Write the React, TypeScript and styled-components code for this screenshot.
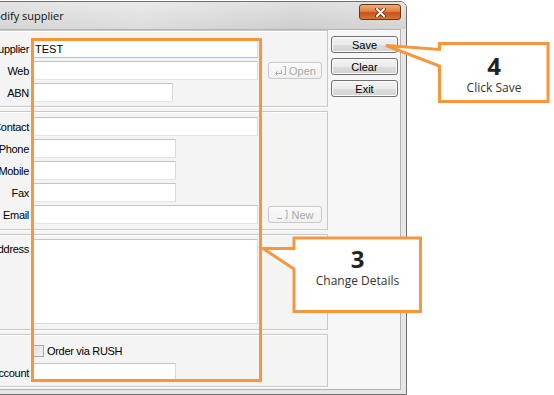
import styled, { createGlobalStyle } from 'styled-components';

const ORANGE = '#f7963c';

const GlobalStyle = createGlobalStyle`
  html, body {
    margin: 0;
    padding: 0;
    background: #ffffff;
  }

  body {
    font-family: "Liberation Sans", Arial, sans-serif;
    overflow: hidden;
  }
`;

const Stage = styled.div`
  position: relative;
  width: 554px;
  height: 395px;
  padding-top: 1px;
  box-sizing: border-box;
  overflow: hidden;
  background: #ffffff;
`;

const Window = styled.div`
  display: flex;
  flex-direction: column;
  width: 447px;
  height: 394px;
  margin-left: -40px;
  box-sizing: border-box;
  border: 1px solid #707070;
  border-radius: 7px 7px 0 0;
  background: #e6e6e6;
  overflow: hidden;
`;

const TitleBar = styled.div`
  display: flex;
  align-items: flex-start;
  flex-shrink: 0;
  height: 27px;
  background:
    linear-gradient(180deg, rgba(255, 255, 255, 0.25), rgba(0, 0, 0, 0.03)),
    linear-gradient(90deg, #d9d9d9 0%, #e3e3e3 40%, #d5d5d5 75%, #dbdbdb 100%);
`;

const Title = styled.div`
  padding: 6px 0 0 23px;
  font-family: "Open Sans", "Liberation Sans", sans-serif;
  font-size: 11px;
  line-height: 16px;
  color: #111111;
`;

const CloseButton = styled.div`
  display: flex;
  align-items: center;
  justify-content: center;
  width: 42px;
  height: 16px;
  margin: 2px 5px 0 auto;
  box-sizing: border-box;
  border: 1px solid #6b3418;
  border-radius: 3px;
  background: linear-gradient(#eeaa78 0%, #e2803f 45%, #c9511c 55%, #da7332 100%);
`;

const Client = styled.div`
  display: flex;
  flex: 1;
  margin: 0 5px 4px 7px;
  border: 1px solid #b4b4b4;
  background: #f4f4f4;
`;

const LeftPanel = styled.div`
  display: flex;
  flex-direction: column;
  gap: 4px;
  flex-shrink: 0;
  width: 359px;
`;

const Section = styled.div<{ $pt: number; $pb: number; $gap: number }>`
  display: flex;
  flex-direction: column;
  gap: ${(p) => p.$gap}px;
  padding: ${(p) => p.$pt}px 0 ${(p) => p.$pb}px;
  border: 1px solid #c8c8c8;
  box-shadow: inset 1px 1px 0 #ffffff, 0 1px 0 #ffffff;
`;

const Row = styled.div<{ $top?: boolean }>`
  display: flex;
  align-items: ${(p) => (p.$top ? 'flex-start' : 'center')};
  min-height: 13px;
`;

const Label = styled.div<{ $pt?: number }>`
  flex-shrink: 0;
  width: 63px;
  padding: ${(p) => p.$pt || 0}px 4px 0 0;
  box-sizing: border-box;
  text-align: right;
  font-size: 11px;
  letter-spacing: -0.3px;
  color: #000000;
  white-space: nowrap;
`;

const Field = styled.input<{ $w: number; $focus?: boolean }>`
  width: ${(p) => p.$w}px;
  height: 19px;
  margin: 0;
  padding: 0 0 0 1px;
  box-sizing: border-box;
  border: 1px solid #dadada;
  border-top-color: #c4c4c4;
  border-bottom-color: ${(p) => (p.$focus ? '#a9c4e0' : '#e4e4e4')};
  background: #ffffff;
  font-family: "Liberation Sans", Arial, sans-serif;
  font-size: 11px;
  color: #000000;
  outline: none;
`;

const Memo = styled.textarea`
  width: 225px;
  height: 85px;
  margin: 0;
  padding: 1px;
  box-sizing: border-box;
  border: 1px solid #dadada;
  border-top-color: #c4c4c4;
  background: #ffffff;
  resize: none;
  outline: none;
`;

const SideButton = styled.button`
  display: flex;
  align-items: center;
  justify-content: center;
  gap: 2px;
  width: 54px;
  height: 17px;
  margin-left: 10px;
  padding: 0;
  box-sizing: border-box;
  border: 1px solid #c8c8c8;
  border-radius: 3px;
  background: linear-gradient(#fafafa, #f0f0f0);
  font-family: "Liberation Sans", Arial, sans-serif;
  font-size: 11px;
  color: #a9a9a9;
`;

const Check = styled.span`
  width: 11px;
  height: 12px;
  box-sizing: border-box;
  border: 1px solid #a8a8a8;
  background: linear-gradient(135deg, #dcdcdc, #f6f6f6);
  box-shadow: inset 0 0 0 1px #eeeeee;
`;

const CheckText = styled.span`
  margin-left: 3px;
  font-size: 11px;
  letter-spacing: -0.3px;
  color: #000000;
`;

const RightColumn = styled.div`
  display: flex;
  flex-direction: column;
  gap: 5px;
  flex: 1;
  padding: 6px 0 0 3px;
  background: #f7f7f7;
`;

const ActionButton = styled.button`
  width: 67px;
  height: 17px;
  padding: 0;
  box-sizing: border-box;
  border: 1px solid #707070;
  border-radius: 3px;
  background: linear-gradient(#f3f3f3 0%, #ebebeb 50%, #dddddd 51%, #d2d2d2 100%);
  box-shadow: inset 0 0 0 1px #fbfbfb;
  font-family: "Liberation Sans", Arial, sans-serif;
  font-size: 11px;
  color: #000000;
`;

const Highlight = styled.div`
  position: absolute;
  left: 31px;
  top: 38px;
  width: 231px;
  height: 344px;
  box-sizing: border-box;
  border: 3px solid ${ORANGE};
  pointer-events: none;
`;

const CalloutLayer = styled.svg`
  position: absolute;
  left: 0;
  top: 0;
  pointer-events: none;
`;

const CalloutBody = styled.div<{ $x: number; $y: number; $w: number }>`
  position: absolute;
  left: ${(p) => p.$x}px;
  top: ${(p) => p.$y}px;
  width: ${(p) => p.$w}px;
  display: flex;
  flex-direction: column;
  align-items: center;
  font-family: "Open Sans", "Noto Sans", sans-serif;
  color: #333333;
`;

const CalloutNumber = styled.div`
  font-size: 24px;
  font-weight: 700;
  line-height: 26px;
  color: #222222;
`;

const CalloutText = styled.div`
  font-size: 12px;
  line-height: 18px;
`;

function OpenIcon() {
  return (
    <svg width="13" height="11" viewBox="0 0 13 11" fill="none" stroke="#aaaaaa" strokeWidth="1">
      <path d="M7.5 5 V8.5 H1.5 M3.5 6.5 L1.5 8.5 L3.5 10.5" />
      <path d="M9.5 1.5 H11.5 V9.5 H9.5" />
    </svg>
  );
}

function NewIcon() {
  return (
    <svg width="13" height="11" viewBox="0 0 13 11" fill="none" stroke="#aaaaaa" strokeWidth="1">
      <path d="M1 9.5 H6" />
      <path d="M9.5 1.5 H11 V9.5 H9.5" />
    </svg>
  );
}

function CloseGlyph() {
  return (
    <svg width="11" height="9" viewBox="0 0 11 9">
      <path d="M2 1 L9 8 M9 1 L2 8" stroke="#5a2a10" strokeWidth="3.6" strokeLinecap="round" />
      <path d="M2 1 L9 8 M9 1 L2 8" stroke="#ffffff" strokeWidth="2" strokeLinecap="round" />
    </svg>
  );
}

export default function App() {
  return (
    <Stage>
      <GlobalStyle />

      <Window>
        <TitleBar>
          <Title>Modify supplier</Title>
          <CloseButton>
            <CloseGlyph />
          </CloseButton>
        </TitleBar>

        <Client>
          <LeftPanel>
            <Section $pt={8} $pb={4} $gap={3}>
              <Row>
                <Label>Supplier</Label>
                <Field $w={225} $focus readOnly defaultValue="TEST" />
              </Row>
              <Row>
                <Label>Web</Label>
                <Field $w={225} readOnly />
                <SideButton disabled>
                  <OpenIcon />
                  Open
                </SideButton>
              </Row>
              <Row>
                <Label>ABN</Label>
                <Field $w={140} readOnly />
              </Row>
            </Section>

            <Section $pt={5} $pb={5} $gap={3}>
              <Row>
                <Label>Contact</Label>
                <Field $w={225} readOnly />
              </Row>
              <Row>
                <Label>Phone</Label>
                <Field $w={143} readOnly />
              </Row>
              <Row>
                <Label>Mobile</Label>
                <Field $w={143} readOnly />
              </Row>
              <Row>
                <Label>Fax</Label>
                <Field $w={143} readOnly />
              </Row>
              <Row>
                <Label>Email</Label>
                <Field $w={225} readOnly />
                <SideButton disabled>
                  <NewIcon />
                  New
                </SideButton>
              </Row>
            </Section>

            <Section $pt={4} $pb={5} $gap={0}>
              <Row $top>
                <Label $pt={4}>Address</Label>
                <Memo readOnly />
              </Row>
            </Section>

            <Section $pt={9} $pb={4} $gap={6}>
              <Row>
                <Label />
                <Check />
                <CheckText>Order via RUSH</CheckText>
              </Row>
              <Row>
                <Label>Account</Label>
                <Field $w={143} readOnly />
              </Row>
            </Section>
          </LeftPanel>

          <RightColumn>
            <ActionButton>Save</ActionButton>
            <ActionButton>Clear</ActionButton>
            <ActionButton>Exit</ActionButton>
          </RightColumn>
        </Client>
      </Window>

      <Highlight />

      <CalloutLayer width="554" height="395" viewBox="0 0 554 395">
        <path
          d="M439.5 43.5 H548 V101.5 H439.5 V66 L386 45.5 L439.5 49.5 Z"
          fill="#ffffff"
          stroke={ORANGE}
          strokeWidth="3"
        />
        <path
          d="M294 238 H420.5 V311.5 H294 V269 L263 248.5 H294 Z"
          fill="#ffffff"
          stroke={ORANGE}
          strokeWidth="3"
        />
      </CalloutLayer>

      <CalloutBody $x={441} $y={53} $w={106}>
        <CalloutNumber>4</CalloutNumber>
        <CalloutText>Click Save</CalloutText>
      </CalloutBody>

      <CalloutBody $x={295} $y={246} $w={125}>
        <CalloutNumber>3</CalloutNumber>
        <CalloutText>Change Details</CalloutText>
      </CalloutBody>
    </Stage>
  );
}
